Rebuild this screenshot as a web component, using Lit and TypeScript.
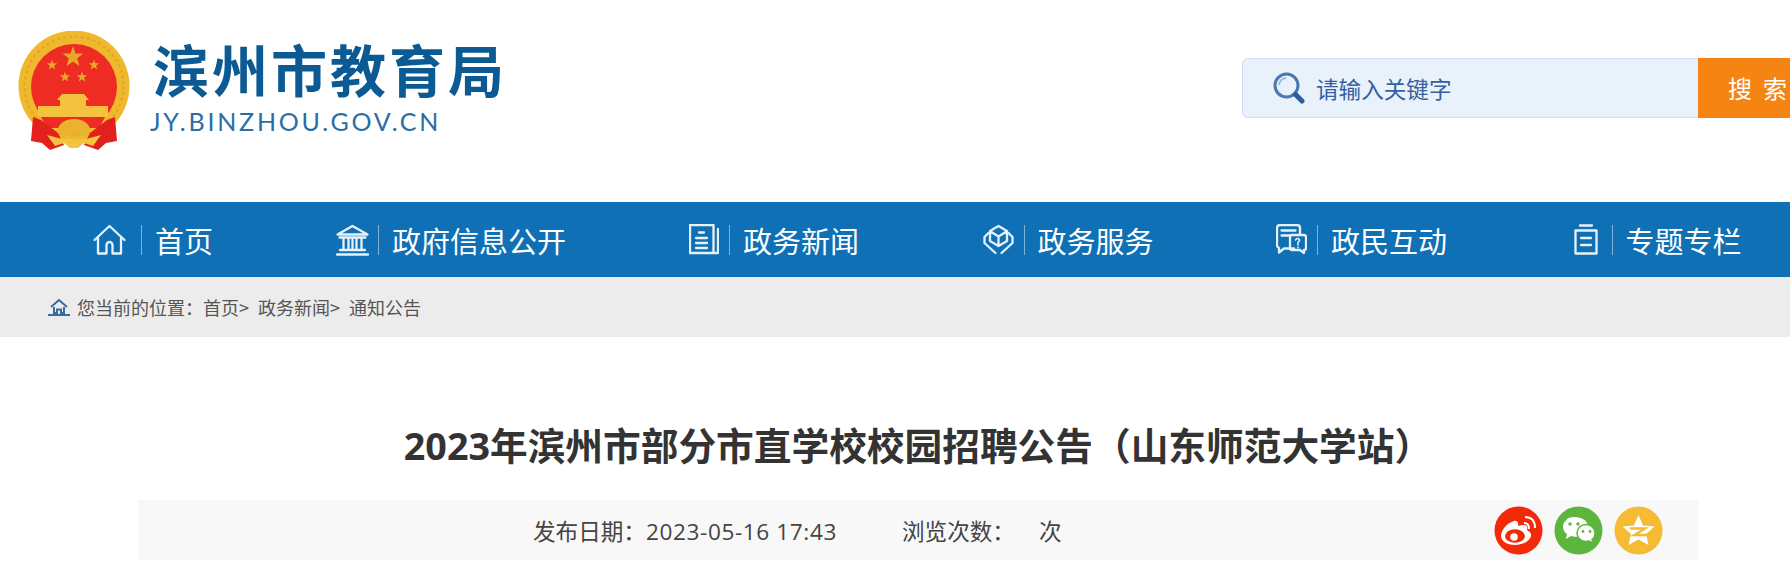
import { LitElement, html, css, svg } from "lit";
import { customElement } from "lit/decorators.js";

const S = (cx: number, cy: number, r: number) => {
  const p: string[] = [];
  for (let i = 0; i < 10; i++) {
    const a = -Math.PI / 2 + (i * Math.PI) / 5;
    const q = i % 2 ? r * 0.4 : r;
    p.push(`${(cx + q * Math.cos(a)).toFixed(2)},${(cy + q * Math.sin(a)).toFixed(2)}`);
  }
  return p.join(" ");
};

const navIcons = [
  svg`<svg class="ico" width="33" height="31" viewBox="0 0 33 31"><path d="M1.5 16 16.5 2l15 14M5 13.5V29.5h8.5V21a3 3 0 0 1 6 0v8.5H28V13.5"/></svg>`,
  svg`<svg class="ico" width="33" height="32" viewBox="0 0 33 32"><path d="M1.500 10.500 16.500 2l15 8.500ZM3.500 13.500h26M7.500 14v11M12.500 14v11M16.500 14v11M20.500 14v11M25.500 14v11M4 26h25M1 30.500h31"/></svg>`,
  svg`<svg class="ico" width="30" height="31" viewBox="0 0 30 31"><path d="M24.500 28V1H1v28h28V5"/><path d="M10 8.500h5M7 14h11M7 19h11M7 24h11"/></svg>`,
  svg`<svg class="ico" width="31" height="31" viewBox="0 0 31 31"><path d="M15.500 2 24 7v10l-8.500 5L7 17V7ZM7.500 7.500l8 5 8-5M15.500 12.500V22"/><path d="M5.500 9 1.500 13v6l6 5.500 5 4.500M25.500 9l4 4v6l-6 5.500-5 4.500"/></svg>`,
  svg`<svg class="ico" width="31" height="31" viewBox="0 0 31 31"><path d="M18 24.500H8L3 28.500v-4.500Q1 23 1 21V4q0-3 3-3h17q3 0 3 3v6"/><path d="M5.500 6.500h14M5.500 11.500h8"/><path d="M14 13q0-2 2-2h12q2 0 2 2v11q0 2-2 2v3l-4-3h-8q-2 0-2-2Z"/><path class="thin" d="M19.500 16q2-2.500 3.700-.7 1 1.300-1.200 3V21M22 23v.8"/></svg>`,
  svg`<svg class="ico" width="24" height="31" viewBox="0 0 24 31"><path d="M6 1.500h12M1.500 6.500h21v23h-21ZM7 14h10M7 21h10"/></svg>`,
];

@customElement("app-root")
export class AppRoot extends LitElement {
  static styles = css`
    :host {
      display: block;
      width: 1790px;
      height: 565px;
      overflow: hidden;
      background: #fff;
      font-family: "Noto Sans CJK SC", "Noto Sans", sans-serif;
    }
    .head {
      height: 202px;
      display: flex;
      align-items: flex-start;
      padding-left: 18px;
    }
    .logo {
      width: 1224px;
      flex: none;
      display: flex;
      padding-top: 31px;
    }
    .emblem { display: block; flex: none; filter: blur(0.4px); }
    .brand { margin-left: 18px; padding-top: 1px; }
    .brand-cn {
      color: #0c5a94;
      font-size: 56px;
      font-weight: 700;
      line-height: 72px;
      letter-spacing: 3px;
      margin-left: 5px;
      white-space: nowrap;
    }
    .brand-en {
      color: #2a6ea6;
      font-family: "Lato", sans-serif;
      font-size: 25px;
      line-height: 28px;
      letter-spacing: 2.8px;
      margin: 3px 0 0 2px;
      white-space: nowrap;
    }
    .search {
      display: flex;
      flex: none;
      margin-top: 58px;
      height: 60px;
    }
    .field {
      width: 456px;
      box-sizing: border-box;
      display: flex;
      align-items: center;
      background: #e9f1fa;
      border: 1px solid #cfe0f6;
      border-right: none;
      border-radius: 6px 0 0 6px;
      padding-left: 30px;
      color: #35609f;
      font-size: 22.6px;
    }
    .field svg { margin-right: 11px; flex: none; }
    .btn {
      width: 100px;
      flex: none;
      box-sizing: border-box;
      background: #f58413;
      color: #fff;
      font-size: 24px;
      letter-spacing: 11px;
      padding-left: 30px;
      line-height: 60px;
      white-space: nowrap;
    }
    nav {
      height: 75px;
      background: #0f70b5;
      display: flex;
      align-items: center;
      padding-left: 93px;
      color: #fff;
      font-size: 29px;
    }
    .item { display: flex; align-items: center; flex: none; white-space: nowrap; }
    .item:nth-child(2) { margin-left: 123px; }
    .item:nth-child(3) { margin-left: 123px; }
    .item:nth-child(4) { margin-left: 123.5px; }
    .item:nth-child(5) { margin-left: 122.5px; }
    .item:nth-child(6) { margin-left: 126.5px; }
    .ico {
      display: block;
      flex: none;
      fill: none;
      stroke: #e6f1f9;
      stroke-width: 2.3;
      stroke-linejoin: round;
      stroke-linecap: round;
    }
    .ico .thin { stroke-width: 1.6; }
    .gap { width: 9px; flex: none; }
    .item:nth-child(1) .gap { width: 15px; }
    .item:nth-child(3) .gap, .item:nth-child(4) .gap { width: 10px; }
    .item:nth-child(5) .gap { width: 10px; }
    .item:nth-child(6) .gap { width: 14px; }
    .sep { width: 1px; height: 30px; background: #7fb2d6; flex: none; margin-right: 13px; }
    .crumb {
      height: 60px;
      background: #ececec;
      display: flex;
      align-items: center;
      padding-left: 48px;
      color: #555;
      font-size: 18px;
    }
    .crumb svg { margin-right: 7px; flex: none; }
    .crumb span { white-space: pre; word-spacing: 5px; }
    .article { margin-left: 138px; width: 1560px; }
    h1 {
      margin: 0;
      height: 163px;
      box-sizing: border-box;
      padding-top: 82px;
      text-align: center;
      color: #333;
      font-family: "Open Sans", "Noto Sans CJK SC", sans-serif;
      font-size: 37.7px;
      font-weight: 700;
      line-height: 54px;
      white-space: nowrap;
    }
    .info {
      height: 60px;
      background: #f8f8f8;
      display: flex;
      align-items: center;
      color: #444;
      font-family: "Open Sans", "Noto Sans CJK SC", sans-serif;
      font-size: 22.6px;
      padding-left: 395px;
      white-space: nowrap;
    }
    .date { width: 369px; flex: none; }
    .num { letter-spacing: 0.6px; }
    .views { width: 137px; flex: none; }
    .count { flex: none; }
    .share { display: flex; gap: 11px; margin-left: auto; margin-right: 35px; }
    .share svg { display: block; }
  `;

  render() {
    const navs = ["首页", "政府信息公开", "政务新闻", "政务服务", "政民互动", "专题专栏"];
    return html`
      <div class="head">
        <div class="logo">
          <svg class="emblem" width="112" height="119" viewBox="18 31 112 119">
            <circle cx="74" cy="86" r="55.500" fill="#f0b92d"/>
            <circle cx="74" cy="86" r="49.500" fill="none" stroke="#e3a425" stroke-width="2" stroke-dasharray="3 3"/>
            <circle cx="74" cy="87" r="43" fill="#ee2c23"/>
            <polygon points="${S(73, 57, 11)}" fill="#e5a82b"/>
            <polygon points="${S(52, 65, 5.5)}" fill="#e5a82b"/>
            <polygon points="${S(94, 65, 5.5)}" fill="#e5a82b"/>
            <polygon points="${S(65, 77, 5.5)}" fill="#e5a82b"/>
            <polygon points="${S(82, 77, 5.5)}" fill="#e5a82b"/>
            <path d="M62 94h22l5 6h-3v6h22v11H38V106h22v-6h-3Z" fill="#f4c23e"/>
            <path d="M41 117h64l-6 11H47Z" fill="#ee2c23"/>
            <path d="M33 117l8 3 17 13 6 12-14 5-8-7-11-2ZM115 117l-8 3-17 13-6 12 14 5 8-7 11-2Z" fill="#e2211c"/>
            <path d="M58 130a16 11 0 0 1 32 0l-3 5H61Z" fill="#eab22f"/>
            <path d="M47 135l15 4h24l15-4-8 11-9-3-6 5H70l-6-5-9 3Z" fill="#f2c440"/>
          </svg>
          <div class="brand">
            <div class="brand-cn">滨州市教育局</div>
            <div class="brand-en">JY.BINZHOU.GOV.CN</div>
          </div>
        </div>
        <div class="search">
          <div class="field">
            <svg width="32" height="32" viewBox="0 0 32 32">
              <circle cx="13.500" cy="13.500" r="11.500" fill="none" stroke="#4b78b0" stroke-width="3"/>
              <path d="M6 13a8 8 0 0 1 7-7" fill="none" stroke="#9db9d9" stroke-width="2"/>
              <path d="M22.500 22.500 29 29" stroke="#2f5c9c" stroke-width="5" stroke-linecap="round"/>
            </svg>
            <span>请输入关键字</span>
          </div>
          <div class="btn">搜索</div>
        </div>
      </div>
      <nav>
        ${navs.map(
          (n, i) => html`<div class="item">${navIcons[i]}<i class="gap"></i><i class="sep"></i><span>${n}</span></div>`
        )}
      </nav>
      <div class="crumb">
        <svg width="22" height="18" viewBox="0 0 22 18">
          <path d="M3 9 11 2l8 7" fill="none" stroke="#3a6a9f" stroke-width="2"/>
          <path d="M6 9v6h3v-3.500h4V15h3V9" fill="none" stroke="#3a6a9f" stroke-width="2"/>
          <path d="M0 17h22" stroke="#3a6a9f" stroke-width="2"/>
        </svg>
        <span>您当前的位置：首页&gt; 政务新闻&gt; 通知公告</span>
      </div>
      <div class="article">
        <h1>2023年滨州市部分市直学校校园招聘公告（山东师范大学站）</h1>
        <div class="info">
          <span class="date">发布日期：<span class="num">2023-05-16 17:43</span></span>
          <span class="views">浏览次数：</span>
          <span class="count">次</span>
          <div class="share">
            <svg width="49" height="49" viewBox="0 0 49 49">
              <circle cx="24.500" cy="24.500" r="24" fill="#f32a0a"/>
              <path d="M20 15C13 17 7 24 7 30c0 5 6 9 14 9 9 0 16-5 16-10 0-3-3-4-4-5 1-3 0-5-4-5-2 0-4 1-5 1 1-3-1-6-4-5Z" fill="#fff"/>
              <ellipse cx="21" cy="30" rx="10" ry="6.800" fill="#f32a0a"/>
              <circle cx="20" cy="31" r="3.800" fill="#fff"/>
              <path d="M30 17q5 0 5 6M31 11q10 0 10 11" fill="none" stroke="#fff" stroke-width="2"/>
            </svg>
            <svg width="49" height="49" viewBox="0 0 49 49">
              <circle cx="24.500" cy="24.500" r="24" fill="#5cb53c"/>
              <path d="M20 11c-7 0-11 5-11 10 0 3 2 6 4 7l-1 5 5-3c3 1 8 1 12 0 8-4 8-19-9-19Z" fill="#fff"/>
              <path d="M32 18.500c-5 0-9 4-9 8.500s4 8.500 9 8.500c1 0 2 0 3-.5l4 2.500-1-4c2-1 3-4 3-6.500 0-4.500-4-8.500-9-8.500Z" fill="#fff" stroke="#5cb53c" stroke-width="1.500"/>
              <circle cx="16" cy="18" r="1.700" fill="#5cb53c"/><circle cx="24" cy="18" r="1.700" fill="#5cb53c"/>
              <circle cx="29" cy="25.500" r="1.400" fill="#5cb53c"/><circle cx="36" cy="25.500" r="1.400" fill="#5cb53c"/>
            </svg>
            <svg width="49" height="49" viewBox="0 0 49 49">
              <circle cx="24.500" cy="24.500" r="24" fill="#f5bb33"/>
              <path d="M24.500 9l4.500 10.500 11.500 1-8.500 7.500 2.500 11-10-5.500-10 5.500 2.500-11-8.500-7.500 11.500-1Z" fill="#fff"/>
              <path d="M16 22.500h15l-10.500 6.500H33" fill="none" stroke="#f5bb33" stroke-width="2.500"/>
            </svg>
          </div>
        </div>
      </div>
    `;
  }
}
